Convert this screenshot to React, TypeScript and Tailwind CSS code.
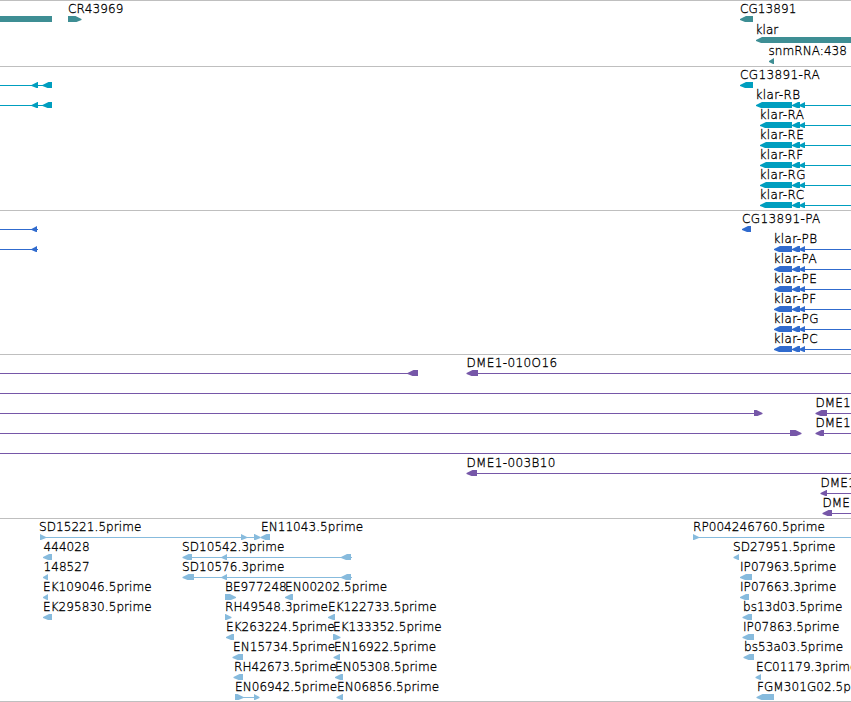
type Dir = 'l' | 'r' | 'n';
type Exon = [start: number, end: number, dir: Dir];
type Label = [x: number, text: string];

interface Row {
  labels?: Label[];
  lines?: [number, number][];
  exons?: Exon[];
}

interface Track {
  color: string;
  pitch: string;
  height: string;
  rows: Row[];
}

const WIDTH = 851;
const HEAD = 6;

const transcript = (name: string, start: number, extra: Row = {}): Row => ({
  labels: [[start - 0.5, name]],
  lines: [[start + 2, WIDTH], ...(extra.lines ?? [])],
  exons: [[start, 792, 'l'], [792, 800, 'l'], [799, 805, 'l'], ...(extra.exons ?? [])],
});

const tracks: Track[] = [
  {
    color: '#3e8e94',
    pitch: 'h-[21px]',
    height: 'h-[66px]',
    rows: [
      {
        labels: [[68, 'CR43969'], [740, 'CG13891']],
        exons: [[0, 52, 'n'], [68, 81.5, 'r'], [740, 753, 'l']],
      },
      { labels: [[755.5, 'klar']], exons: [[756, 860, 'l']] },
      { labels: [[768.5, 'snmRNA:438']], exons: [[769, 774, 'l']] },
    ],
  },
  {
    color: '#009ebf',
    pitch: 'h-5',
    height: 'h-36',
    rows: [
      {
        labels: [[740, 'CG13891-RA']],
        lines: [[0, 52]],
        exons: [[31.5, 38, 'l'], [42.5, 52, 'l'], [740, 753, 'l']],
      },
      transcript('klar-RB', 756, { lines: [[0, 52]], exons: [[31.5, 38, 'l'], [42.5, 52, 'l']] }),
      transcript('klar-RA', 760),
      transcript('klar-RE', 760),
      transcript('klar-RF', 760),
      transcript('klar-RG', 760),
      transcript('klar-RC', 760),
    ],
  },
  {
    color: '#306bce',
    pitch: 'h-5',
    height: 'h-36',
    rows: [
      { labels: [[742, 'CG13891-PA']], lines: [[0, 38]], exons: [[31.5, 37, 'l'], [742, 751, 'l']] },
      transcript('klar-PB', 774, { lines: [[0, 38]], exons: [[31.5, 37, 'l']] }),
      transcript('klar-PA', 774),
      transcript('klar-PE', 774),
      transcript('klar-PF', 774),
      transcript('klar-PG', 774),
      transcript('klar-PC', 774),
    ],
  },
  {
    color: '#7657a8',
    pitch: 'h-5',
    height: 'h-[164px]',
    rows: [
      {
        labels: [[466.5, 'DME1-010O16']],
        lines: [[0, 418], [468, WIDTH]],
        exons: [[407.5, 418, 'l'], [466.5, 478, 'l']],
      },
      { lines: [[0, WIDTH]] },
      { labels: [[815.5, 'DME1']], lines: [[0, 761], [818, WIDTH]], exons: [[754, 762.5, 'r'], [815.5, 827, 'l']] },
      { labels: [[815.5, 'DME1']], lines: [[0, 800], [818, WIDTH]], exons: [[790, 801.5, 'r'], [815.5, 824, 'l']] },
      { lines: [[0, WIDTH]] },
      { labels: [[466.5, 'DME1-003B10']], lines: [[468, WIDTH]], exons: [[466.5, 477, 'l']] },
      { labels: [[820.5, 'DME1']], lines: [[822, WIDTH]], exons: [[820.5, 827, 'l']] },
      { labels: [[822.5, 'DME']], lines: [[824, WIDTH]], exons: [[822.5, 832, 'l']] },
    ],
  },
  {
    color: '#87bbdd',
    pitch: 'h-5',
    height: 'h-[183px]',
    rows: [
      {
        labels: [[39, 'SD15221.5prime'], [261, 'EN11043.5prime'], [693, 'RP004246760.5prime']],
        lines: [[40, 260], [693, WIDTH]],
        exons: [[40, 46, 'r'], [241, 247, 'r'], [254, 260.5, 'r'], [260.5, 270, 'l'], [693, 699, 'r']],
      },
      {
        labels: [[43.5, '444028'], [182, 'SD10542.3prime'], [733, 'SD27951.5prime']],
        lines: [[184, 352]],
        exons: [[43, 52, 'l'], [182.5, 192, 'l'], [221.5, 227, 'l'], [341, 351, 'l'], [733.5, 739, 'l']],
      },
      {
        labels: [[43.5, '148527'], [182, 'SD10576.3prime'], [740, 'IP07963.5prime']],
        lines: [[184, 352]],
        exons: [[43, 48, 'l'], [182.5, 194, 'l'], [221.5, 227, 'l'], [341, 351, 'l'], [740, 752, 'l']],
      },
      {
        labels: [[43, 'EK109046.5prime'], [225, 'BE977248'], [285, 'EN00202.5prime'], [740, 'IP07663.3prime']],
        exons: [[43, 48, 'l'], [225, 236, 'r'], [285, 293, 'l'], [740, 749, 'l']],
      },
      {
        labels: [[43, 'EK295830.5prime'], [225, 'RH49548.3prime'], [328, 'EK122733.5prime'], [743, 'bs13d03.5prime']],
        exons: [[43, 52, 'l'], [225, 231.5, 'r'], [328, 335, 'l'], [742.5, 752, 'l']],
      },
      {
        labels: [[226, 'EK263224.5prime'], [333, 'EK133352.5prime'], [743, 'IP07863.5prime']],
        exons: [[226, 234, 'l'], [333, 340.5, 'r'], [742.5, 754, 'l']],
      },
      {
        labels: [[233, 'EN15734.5prime'], [334, 'EN16922.5prime'], [744, 'bs53a03.5prime']],
        exons: [[232.5, 243, 'l'], [333.5, 340, 'l'], [743.5, 754, 'l']],
      },
      {
        labels: [[234, 'RH42673.5prime'], [335, 'EN05308.5prime'], [756, 'EC01179.3prime']],
        exons: [[233.5, 243, 'l'], [335, 343, 'l'], [755.5, 761, 'l']],
      },
      {
        labels: [[235, 'EN06942.5prime'], [337, 'EN06856.5prime'], [757, 'FGM301G02.5prime']],
        lines: [[235, 258]],
        exons: [[235, 243.5, 'r'], [254, 259.5, 'r'], [336.5, 343, 'l'], [756.5, 774, 'l']],
      },
    ],
  },
];

function exonPoints([a, b, dir]: Exon) {
  const head = Math.min(HEAD, b - a);
  if (dir === 'l') return `${a},3 ${a + head},0 ${b},0 ${b},6 ${a + head - 1},6 ${a},4`;
  if (dir === 'r') return `${a},0 ${b - head},0 ${b},3 ${b},4 ${b - head + 1},6 ${a},6`;
  return `${a},0 ${b},0 ${b},6 ${a},6`;
}

function FeatureRow({ row, color, pitch }: { row: Row; color: string; pitch: string }) {
  return (
    <div className={`relative shrink-0 ${pitch}`}>
      {row.labels?.map(([x, text]) => (
        <span
          key={x}
          className={`absolute top-0 leading-4 ${text.includes('-') ? 'tracking-[0.38px]' : 'tracking-[0.07px]'}`}
          style={{ left: x }}
        >
          {text}
        </span>
      ))}
      <svg className="absolute top-[15px] left-0" width={WIDTH} height={6} viewBox={`0 0 ${WIDTH} 6`}>
        {row.lines?.map(([a, b], i) => <rect key={i} x={a} y={3} width={b - a} height={1} fill={color} />)}
        {row.exons?.map((e, i) => <polygon key={i} points={exonPoints(e)} fill={color} />)}
      </svg>
    </div>
  );
}

export default function App() {
  return (
    <main className="flex h-[702px] w-[851px] flex-col overflow-hidden bg-white font-['DejaVu_Sans',sans-serif] text-[12px] font-extralight whitespace-nowrap text-black [-webkit-text-stroke:0.3px_black]">
      {tracks.map((t, i) => (
        <section key={i} className={`flex shrink-0 flex-col border-t border-[#bfbfbf] ${t.height}`}>
          {t.rows.map((row, j) => (
            <FeatureRow key={j} row={row} color={t.color} pitch={t.pitch} />
          ))}
        </section>
      ))}
      <div className="h-px shrink-0 bg-[#bfbfbf]" />
    </main>
  );
}
